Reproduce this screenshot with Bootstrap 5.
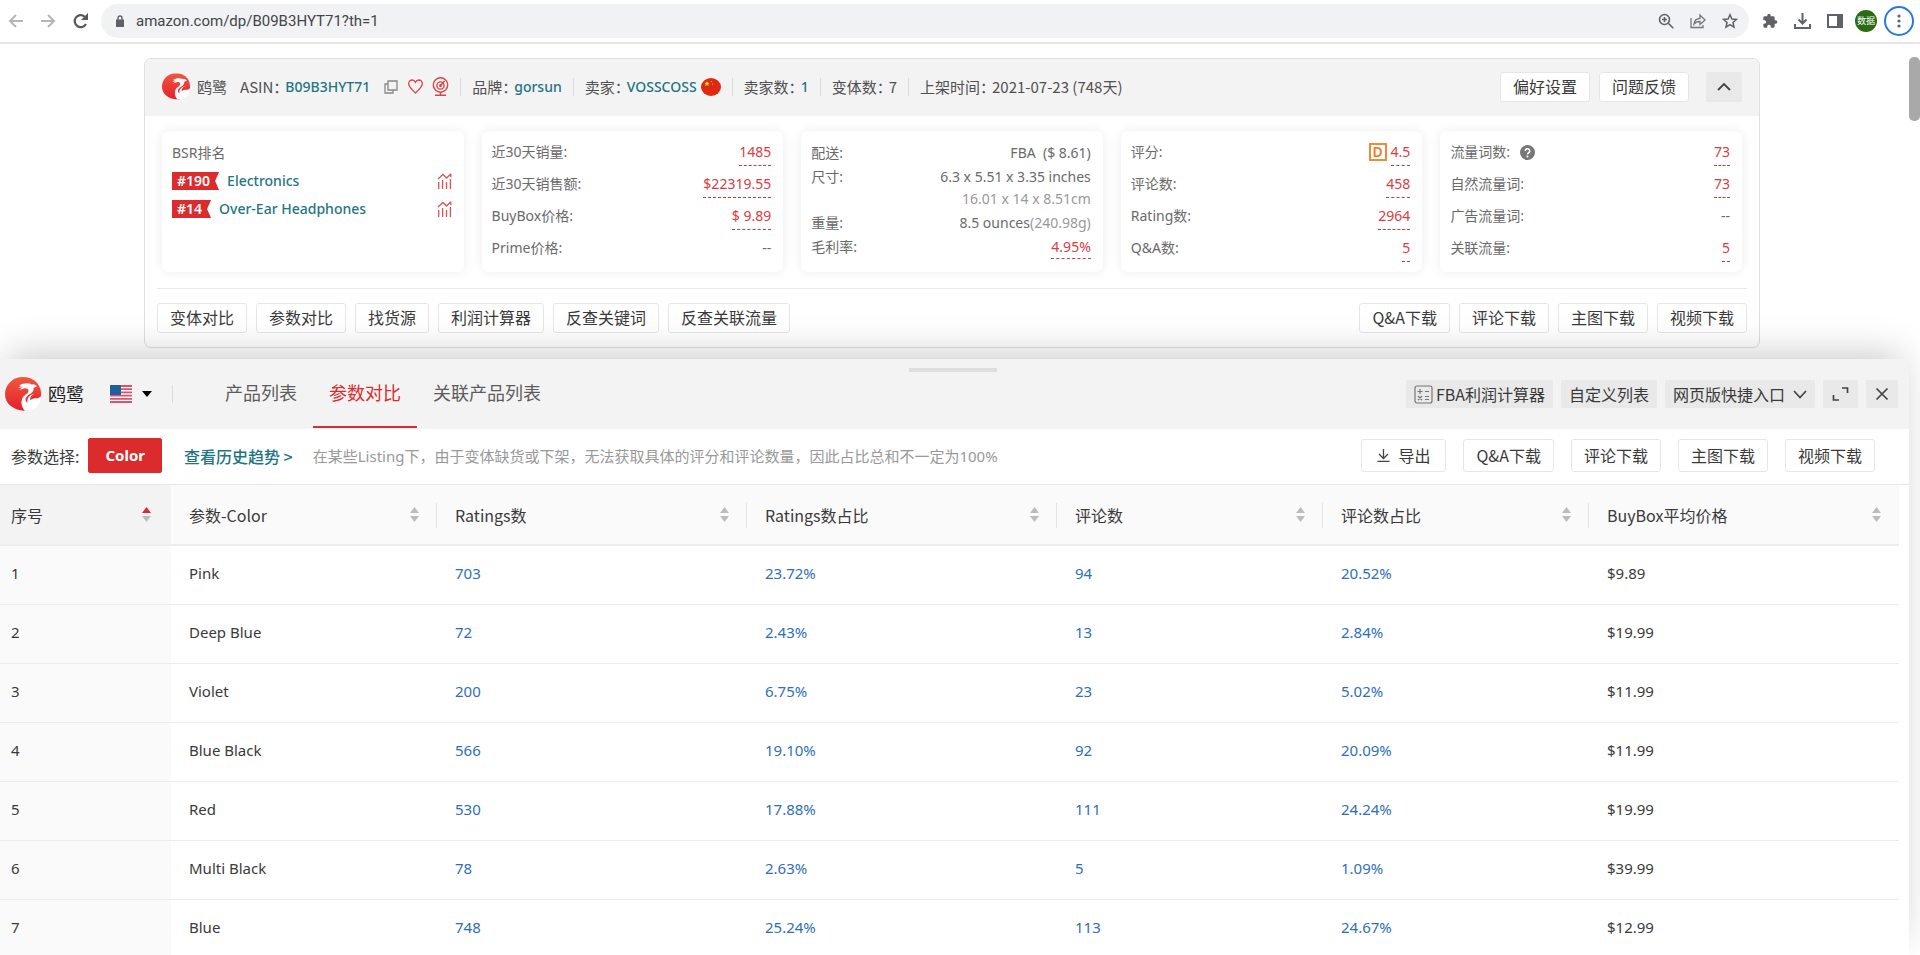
<!DOCTYPE html>
<html lang="zh-CN">
<head>
<meta charset="utf-8">
<meta name="viewport" content="width=device-width, initial-scale=1">
<title>鸥鹭 - 参数对比</title>
<link href="https://cdn.jsdelivr.net/npm/bootstrap@5.3.0/dist/css/bootstrap.min.css" rel="stylesheet">
<style>
  :root { --brand-red: #dc2b2d; --teal: #1f7583; --ink: #3a3a3a; --soft: #6a6a6a; --line: #e9e9e9; }
  body { font-family: "Noto Sans", "Noto Sans CJK SC", sans-serif; font-size: 14px; line-height: 22px; color: var(--ink); background: #fff; height: 100vh; overflow: hidden; position: relative; }
  a { text-decoration: none; }
  svg { display: block; flex: none; }
  .cjk { font-family: "Noto Sans CJK SC", sans-serif; font-size: 16px; }
  .f15 { font-size: 15px; }

  /* browser bar */
  .toolbar-top { height: 44px; border-bottom: 2px solid #e6e6e6; padding: 0 6px 0 8px; color: #5f6368; }
  .icon-btn { border: 0; background: none; padding: 0; color: inherit; }
  .omnibox { height: 34px; border-radius: 17px; background: #f0f2f4; padding: 0 11px 0 15px; margin-left: 12px; }
  .omnibox input { border: 0; background: none; outline: 0; color: #43464a; font-family: Roboto, sans-serif; font-size: 15px; padding: 0; margin-left: 12px; }
  .avatar { width: 22px; height: 22px; border-radius: 50%; background: #2b6b16; color: #fff; font-size: 9px; line-height: 22px; padding: 0; border: 0; }
  .ring { width: 30px; height: 30px; border-radius: 50%; border: 2px solid #2a78dc; }
  .page-thumb { position: absolute; right: 0; top: 57px; width: 11px; height: 64px; border-radius: 5px; background: #a9a9a9; }

  /* product summary panel */
  .summary { margin: 14px 160px 11px 144px; border: 1px solid #dde0e1; border-radius: 7px; background: #fff; }
  .summary-head { background: #f3f3f3; height: 57px; padding: 0 17px 2px; border-radius: 6px 6px 0 0; color: #505050; font-family: "Noto Sans CJK SC", sans-serif; }
  .summary-head .teal { font-family: "Noto Sans", sans-serif; font-size: 14px; }
  .summary-head .lbl { margin-right: -3px; }
  .vline { width: 1px; height: 18px; background: #dcdcdc; flex: none; }
  .summary-head .vline { margin: 0 11px; }
  .teal { color: var(--teal); font-weight: 500; }
  .btn-plain { --bs-btn-border-color: #e6e6e6; --bs-btn-bg: #fff; --bs-btn-color: #3a3a3a; --bs-btn-hover-bg: #f5f5f5; --bs-btn-hover-border-color: #ddd; --bs-btn-border-radius: 3px; --bs-btn-padding-x: 12px; --bs-btn-padding-y: 0; font-family: "Noto Sans CJK SC", sans-serif; font-size: 16px; line-height: 26px; padding-bottom: 2px; }
  .btn-soft { --bs-btn-bg: #e9e9e9; --bs-btn-border-color: #e9e9e9; --bs-btn-hover-bg: #dedede; --bs-btn-hover-border-color: #dedede; --bs-btn-border-radius: 2px; --bs-btn-padding-x: 7px; padding-bottom: 0; }
  .tiles { padding: 15px 17px 16px; gap: 18px; }
  .tile { flex: 1 1 0; min-width: 0; height: 141px; padding: 5px 12px 5px 10px; border-radius: 7px; background: #fff; box-shadow: 0 0 12px rgba(0,0,0,.08); color: var(--soft); }
  .tile-row { display: flex; justify-content: space-between; align-items: flex-start; padding-top: 5px; height: 32px; }
  .tile-tight { display: flex; flex-direction: column; gap: 2px; padding-top: 11px; }
  .tile-tight .tile-row { padding-top: 0; height: auto; }
  .val { color: #dd3b3e; border-bottom: 1px dashed #c9383b; padding-bottom: 2px; line-height: 22px; }
  .grade { border: 2px solid #ee8a3c; color: #ee7a24; font-weight: 600; width: 18px; height: 18px; line-height: 14px; text-align: center; margin: 2px 4px 0 0; }
  .rank-tag { background: var(--brand-red); color: #fff; font-weight: 600; line-height: 18px; height: 18px; padding: 0 9px 0 5px; clip-path: polygon(0 0, 100% 0, calc(100% - 4px) 50%, 100% 100%, 0 100%); }
  .rank-name { line-height: 18px; }
  .summary-foot { margin: 0 12px; padding: 14px 0; border-top: 1px solid #ebebeb; }
  .summary-foot .btn-plain { --bs-btn-bg: transparent; }

  /* drawer */
  .drawer { position: relative; margin-right: 11px; background: #fff; box-shadow: 0 -12px 36px -8px rgba(0,0,0,.22); }
  .drawer-head { background: #f3f3f3; height: 70px; padding: 0 11px 0 5px; position: relative; }
  .grip { position: absolute; left: 50%; top: 9px; width: 88px; height: 4px; margin-left: -46px; background: #dedede; border: 0; padding: 0; }
  .brand-name { font-size: 18px; color: #222; }
  .drawer-tabs { margin-left: 36px; height: 70px; }
  .drawer-tabs .nav-link { color: #5c5c5c; font-size: 18px; line-height: 66px; padding: 1px 16px 0; height: 69px; border-bottom: 2px solid transparent; border-radius: 0; }
  .drawer-tabs .nav-link.active { color: var(--brand-red); border-color: var(--brand-red); background: none; }
  .filter-bar { height: 56px; padding: 0 34px 2px 11px; border-bottom: 1px solid #e6e6e6; }
  .btn-color { --bs-btn-bg: var(--brand-red); --bs-btn-border-color: var(--brand-red); --bs-btn-color: #fff; --bs-btn-hover-bg: #c02022; --bs-btn-hover-color: #fff; --bs-btn-border-radius: 2px; --bs-btn-padding-x: 16px; --bs-btn-padding-y: 0; font-weight: 700; font-size: 15px; line-height: 33px; }
  .hint { color: #999; }
  .filter-bar .btn-plain { line-height: 30px; padding-bottom: 1px; }

  /* comparison table */
  .grid-wrap { padding-right: 11px; background: #fff; }
  .grid { table-layout: fixed; margin: 0; font-size: 15px; --bs-table-bg: transparent; --bs-table-color: #3a3a3a; }
  .grid > :not(caption) > * > * { padding: 0 18px 4px; height: 59px; vertical-align: middle; border-bottom: 1px solid #ececec; }
  .grid > thead > tr > th { height: 60px; padding-bottom: 0; font-weight: 400; background: #fafafa; border-bottom: 2px solid #ededed; }
  .grid > * > tr > :first-child { padding-left: 11px; padding-right: 20px; }
  .grid > tbody > tr > th { background: #fafafa; font-weight: 400; }
  .grid > thead > tr > th:first-child { background: #f3f3f3; }
  .grid > thead > tr > th.sep { background: linear-gradient(#e4e4e4, #e4e4e4) right 18px / 1px 25px no-repeat #fafafa; }
  .grid a { color: #2f6fb8; }
</style>
</head>
<body>
<svg width="0" height="0" class="position-absolute" aria-hidden="true">
  <defs>
    <linearGradient id="red" x1="0" y1="0" x2="0" y2="1"><stop offset="0" stop-color="#f0573f"/><stop offset="1" stop-color="#e3202a"/></linearGradient>
    <symbol id="logo" viewBox="0 0 36 34">
      <path fill="url(#red)" d="M18 0C8 0 0 7.500 0 17c0 9 7 16.500 22 17l6-4 8-11C37 8 29 0 18 0Z"/>
      <path fill="#fff" d="M14 8.500c4-2.500 9-3 13-1 1.500-.5 3.500 0 5 2-1.500.3-2.500 1-3.500 1.500.5 2.500-1 4.500-3.500 6-3 1.800-4.500 3.500-4.500 5.500 0 1.500.8 2.800 2 3.500-.8-4.500 2-8.500 6.500-9 3-.3 6 1 7 4C35 29 29 34 20 34c-3.500-4-4.500-9-2.500-13 2-3.700 6.500-4.500 6-7.500-.3-2-2.500-2.500-4.500-2l-5 1.500 3.500-2.500-4.500.2 3.500-1.700Z"/>
      <path fill="#e9322f" d="M35.500 19c-2-2.800-6-3-8.500-.8-1.800 1.700-2.200 3.300-1.500 5 1.500-1.500 3.500-1.900 5.500-1.900 2.500 0 3.800-.5 4.500-2.300Z"/>
    </symbol>
    <symbol id="chart" viewBox="0 0 15 16"><path d="M1 6l5-4.500L9.500 5 14 .700M13.800 4v-3.300M1.700 16V9M5.600 16V7M9.500 16V9M13.400 16V6" fill="none" stroke="#dd5456" stroke-width="1.300"/></symbol>
    <symbol id="sort" viewBox="0 0 9 15"><path fill="#bcbcbc" d="M4.500 0 9 6H0z"/><path fill="#bcbcbc" d="M4.500 15 9 9H0z"/></symbol>
    <symbol id="sort-up" viewBox="0 0 9 15"><path fill="#dc2b2d" d="M4.500 0 9 6H0z"/><path fill="#bcbcbc" d="M4.500 15 9 9H0z"/></symbol>
  </defs>
</svg>

<header class="toolbar-top d-flex align-items-center">
  <button class="icon-btn" aria-label="后退"><svg width="16" height="16" viewBox="0 0 16 16" fill="none" stroke="#b4b6b8" stroke-width="2"><path d="M15 8H2M8 2 2 8l6 6"/></svg></button>
  <button class="icon-btn ms-3" aria-label="前进"><svg width="16" height="16" viewBox="0 0 16 16" fill="none" stroke="#b4b6b8" stroke-width="2"><path d="M1 8h13M8 2l6 6-6 6"/></svg></button>
  <button class="icon-btn ms-3" aria-label="刷新"><svg width="17" height="16" viewBox="0 0 17 16"><path d="M14 11A6 6 0 1 1 12.500 3.500L14 5" fill="none" stroke="#55585c" stroke-width="2.200"/><path fill="#55585c" d="M16 0v7H9z"/></svg></button>
  <div class="omnibox d-flex align-items-center flex-grow-1">
    <svg width="8" height="12" viewBox="0 0 8 12"><path fill="#5f6368" d="M0 4.500h8V12H0z"/><path d="M2 5V3a2 2 0 0 1 4 0v2" fill="none" stroke="#5f6368" stroke-width="1.400"/></svg>
    <input class="flex-grow-1" type="text" value="amazon.com/dp/B09B3HYT71?th=1" aria-label="地址">
    <div class="d-flex align-items-center gap-3">
      <button class="icon-btn" aria-label="缩放"><svg width="16" height="16" viewBox="0 0 16 16" fill="none" stroke="#5f6368" stroke-width="1.600"><circle cx="6.500" cy="6.500" r="5"/><path d="m10.300 10.300 5 5M4 6.500h5M6.500 4v5"/></svg></button>
      <button class="icon-btn" aria-label="分享"><svg width="16" height="16" viewBox="0 0 16 16" fill="none" stroke="#74777b" stroke-width="1.300"><path d="M1 5v9.500h12V12M4 11c.5-4 3-5.500 6-5.500V2l5 5-5 4.500V8.500C7.500 8.500 5.500 9 4 11Z"/></svg></button>
      <button class="icon-btn" aria-label="收藏"><svg width="16" height="16" viewBox="0 0 16 16" fill="none" stroke="#5f6368" stroke-width="1.500"><path d="m8 1.700 1.900 4.300 4.600.4-3.500 3.100 1 4.600L8 11.700l-4 2.400 1-4.600L1.500 6.400 6.100 6Z"/></svg></button>
    </div>
  </div>
  <div class="d-flex align-items-center" style="gap:12px;margin-left:13px">
    <div class="d-flex align-items-center gap-3">
    <button class="icon-btn" aria-label="扩展程序"><svg width="16" height="16" viewBox="0 0 24 24"><path fill="#5f6368" d="M20.500 11H19V7a2 2 0 0 0-2-2h-4V3.500a2.500 2.500 0 0 0-5 0V5H4a2 2 0 0 0-2 2v3.800h1.500a2.700 2.700 0 0 1 0 5.400H2V20a2 2 0 0 0 2 2h3.800v-1.500a2.700 2.700 0 0 1 5.400 0V22H17a2 2 0 0 0 2-2v-4h1.500a2.500 2.500 0 0 0 0-5Z"/></svg></button>
    <button class="icon-btn" aria-label="下载"><svg width="17" height="16" viewBox="0 0 17 16" fill="none" stroke="#5f6368" stroke-width="2"><path d="M8.500 0v10M4.500 6.500l4 4 4-4M1 11v4h15v-4"/></svg></button>
    <button class="icon-btn" aria-label="侧边栏"><svg width="16" height="14" viewBox="0 0 16 14"><path d="M1 1h14v12H1z" fill="none" stroke="#5f6368" stroke-width="2"/><path fill="#5f6368" d="M10 1h5v12h-5z"/></svg></button>
    </div>
    <div class="d-flex align-items-center" style="gap:7px"><button class="avatar">数据</button>
    <button class="icon-btn ring d-flex align-items-center justify-content-center" aria-label="菜单"><svg width="4" height="14" viewBox="0 0 4 14" fill="#5f6368"><circle cx="2" cy="2" r="1.600"/><circle cx="2" cy="7" r="1.600"/><circle cx="2" cy="12" r="1.600"/></svg></button></div>
  </div>
</header>
<div class="page-thumb"></div>

<main>
<section class="summary">
  <div class="summary-head d-flex align-items-center f15">
    <svg width="28" height="27" viewBox="0 0 36 34"><use href="#logo"/></svg>
    <span style="margin-left:7px">鸥鹭</span>
    <span class="lbl" style="margin-left:13px">ASIN：</span><a href="#" class="teal">B09B3HYT71</a>
    <button class="icon-btn" style="margin-left:14px" aria-label="复制"><svg width="14" height="14" viewBox="0 0 14 14" fill="none" stroke="#888" stroke-width="1.300"><path d="M4 1h9v9H4zM4 4H1v9h8v-3"/></svg></button>
    <button class="icon-btn" style="margin-left:10px" aria-label="收藏产品"><svg width="15" height="15" viewBox="0 0 15 15" fill="none" stroke="#dc4548" stroke-width="1.300"><path d="M7.500 14C3 10 .7 7.500.7 4.800.7 2.500 2.300 1 4.200 1 5.600 1 6.800 1.800 7.500 3.200 8.200 1.800 9.400 1 10.800 1c1.900 0 3.500 1.500 3.500 3.800C14.300 7.500 12 10 7.500 14Z"/></svg></button>
    <button class="icon-btn" style="margin-left:9px" aria-label="监控"><svg width="17" height="19" viewBox="0 0 17 19" fill="none" stroke="#dc4548" stroke-width="1.400"><circle cx="8.500" cy="8" r="7.200"/><circle cx="8.500" cy="8.500" r="3.600"/><circle cx="8.500" cy="8.500" r=".8"/><path d="m9 8 3.500-4M8.500 15v3M3 18.200h11"/></svg></button>
    <i class="vline"></i>
    <span class="lbl">品牌：</span><a href="#" class="teal">gorsun</a>
    <i class="vline"></i>
    <span class="lbl">卖家：</span><a href="#" class="teal">VOSSCOSS</a>
    <svg class="ms-1" width="20" height="18" viewBox="0 0 20 18"><ellipse cx="10" cy="9" rx="10" ry="9" fill="#de2910"/><path fill="#fd3" d="m6 3 .8 1.800 2 .1-1.600 1.200.6 1.900L6 6.900 4.200 8l.6-1.900-1.600-1.200 2-.1Z"/><circle cx="10.500" cy="3.500" r=".6" fill="#fd3"/><circle cx="11.500" cy="6" r=".6" fill="#fd3"/></svg>
    <i class="vline"></i>
    <span class="lbl">卖家数：</span><a href="#" class="teal">1</a>
    <i class="vline"></i>
    <span class="lbl">变体数：</span><span>7</span>
    <i class="vline"></i>
    <span class="lbl">上架时间：</span><span>2021-07-23 (748天)</span>
    <div class="d-flex ms-auto" style="gap:9px">
      <button class="btn btn-plain">偏好设置</button>
      <button class="btn btn-plain">问题反馈</button>
      <button class="btn btn-plain btn-soft px-2 ms-2 d-flex align-items-center" aria-label="收起"><svg width="18" height="18" viewBox="0 0 18 18" fill="none" stroke="#444" stroke-width="1.800"><path d="m3 12 6-6 6 6"/></svg></button>
    </div>
  </div>

  <div class="tiles d-flex">
    <div class="tile tile-tight">
      <div>BSR排名</div>
      <div class="d-flex flex-column" style="gap:10px;margin-top:6px">
        <div class="d-flex align-items-center gap-2"><span class="rank-tag">#190</span><a href="#" class="teal rank-name">Electronics</a><svg class="ms-auto" width="15" height="16"><use href="#chart"/></svg></div>
        <div class="d-flex align-items-center gap-2"><span class="rank-tag">#14</span><a href="#" class="teal rank-name">Over-Ear Headphones</a><svg class="ms-auto" width="15" height="16"><use href="#chart"/></svg></div>
      </div>
    </div>
    <div class="tile">
      <div class="tile-row"><span>近30天销量:</span><a href="#" class="val">1485</a></div>
      <div class="tile-row"><span>近30天销售额:</span><a href="#" class="val">$22319.55</a></div>
      <div class="tile-row"><span>BuyBox价格:</span><a href="#" class="val">$ 9.89</a></div>
      <div class="tile-row"><span>Prime价格:</span><span>--</span></div>
    </div>
    <div class="tile tile-tight">
      <div class="tile-row"><span>配送:</span><span>FBA&nbsp; ($ 8.61)</span></div>
      <div class="tile-row"><span>尺寸:</span><span class="text-end">6.3 x 5.51 x 3.35 inches<br><span class="hint">16.01 x 14 x 8.51cm</span></span></div>
      <div class="tile-row"><span>重量:</span><span>8.5 ounces<span class="hint">(240.98g)</span></span></div>
      <div class="tile-row"><span>毛利率:</span><a href="#" class="val pb-0">4.95%</a></div>
    </div>
    <div class="tile">
      <div class="tile-row"><span>评分:</span><span class="d-flex align-items-start"><span class="grade">D</span><a href="#" class="val">4.5</a></span></div>
      <div class="tile-row"><span>评论数:</span><a href="#" class="val">458</a></div>
      <div class="tile-row"><span>Rating数:</span><a href="#" class="val">2964</a></div>
      <div class="tile-row"><span>Q&amp;A数:</span><a href="#" class="val">5</a></div>
    </div>
    <div class="tile">
      <div class="tile-row"><span class="d-flex align-items-center" style="gap:10px">流量词数: <svg width="15" height="15" viewBox="0 0 15 15"><circle cx="7.500" cy="7.500" r="7.500" fill="#777"/><path d="M5.300 6a2.200 2.200 0 1 1 3 2c-.6.3-.8.6-.8 1.400" fill="none" stroke="#fff" stroke-width="1.500"/><circle cx="7.500" cy="11.500" r="1" fill="#fff"/></svg></span><a href="#" class="val">73</a></div>
      <div class="tile-row"><span>自然流量词:</span><a href="#" class="val">73</a></div>
      <div class="tile-row"><span>广告流量词:</span><span>--</span></div>
      <div class="tile-row"><span>关联流量:</span><a href="#" class="val">5</a></div>
    </div>
  </div>

  <div class="summary-foot d-flex" style="gap:9px">
    <button class="btn btn-plain">变体对比</button>
    <button class="btn btn-plain">参数对比</button>
    <button class="btn btn-plain">找货源</button>
    <button class="btn btn-plain">利润计算器</button>
    <button class="btn btn-plain">反查关键词</button>
    <button class="btn btn-plain">反查关联流量</button>
    <button class="btn btn-plain ms-auto">Q&amp;A下载</button>
    <button class="btn btn-plain">评论下载</button>
    <button class="btn btn-plain">主图下载</button>
    <button class="btn btn-plain">视频下载</button>
  </div>
</section>

<section class="drawer">
  <div class="drawer-head d-flex align-items-center">
    <button class="grip" aria-label="调整高度"></button>
    <svg width="36" height="34"><use href="#logo"/></svg>
    <span class="brand-name" style="margin-left:7px">鸥鹭</span>
    <button class="icon-btn d-flex align-items-center" style="margin-left:26px;gap:10px" aria-label="站点">
      <svg width="22" height="18" viewBox="0 0 22 18"><path fill="#fff" d="M0 0h22v18H0z"/><path d="M0 1h22M0 4.200h22M0 7.400h22M0 10.600h22M0 13.800h22M0 17h22" stroke="#e0506a" stroke-width="1.800"/><path fill="#20609f" d="M0 0h11v10H0z"/></svg>
      <svg width="10" height="6" viewBox="0 0 10 6"><path d="M0 0h10L5 6z"/></svg>
    </button>
    <i class="vline" style="margin-left:20px"></i>
    <nav class="nav drawer-tabs">
      <a class="nav-link" href="#">产品列表</a>
      <a class="nav-link active" href="#">参数对比</a>
      <a class="nav-link" href="#">关联产品列表</a>
    </nav>
    <div class="d-flex ms-auto" style="gap:8px">
      <button class="btn btn-plain btn-soft d-flex align-items-center"><svg style="margin-right:3px" width="19" height="19" viewBox="0 0 19 19" fill="none" stroke="#777" stroke-width="1.200"><rect x="1" y="1" width="17" height="17" rx="2"/><path d="M3.500 6.500h5M6 4v5M11 6.500h4M4 11l4 4M8 11l-4 4M11 11.500h4M11 14.500h4"/></svg>FBA利润计算器</button>
      <button class="btn btn-plain btn-soft">自定义列表</button>
      <button class="btn btn-plain btn-soft d-flex align-items-center gap-2">网页版快捷入口<svg width="14" height="9" viewBox="0 0 14 9" fill="none" stroke="#444" stroke-width="1.700"><path d="m1 1 6 6.500L13 1"/></svg></button>
      <button class="btn btn-plain btn-soft d-flex align-items-center px-2" aria-label="展开"><svg width="17" height="16" viewBox="0 0 17 16" fill="none" stroke="#444" stroke-width="1.700"><path d="M10 2h5.500v5M7 14H1.500V9"/></svg></button>
      <button class="btn btn-plain btn-soft d-flex align-items-center px-2" aria-label="关闭"><svg width="14" height="14" viewBox="0 0 14 14" fill="none" stroke="#444" stroke-width="1.700"><path d="m1.500 1.500 11 11M12.500 1.500l-11 11"/></svg></button>
    </div>
  </div>

  <div class="filter-bar d-flex align-items-center">
    <span class="cjk">参数选择:</span>
    <button class="btn btn-color" style="margin-left:9px">Color</button>
    <a href="#" class="teal cjk" style="margin-left:22px">查看历史趋势 &gt;</a>
    <span class="hint f15 text-nowrap" style="margin-left:20px">在某些Listing下，由于变体缺货或下架，无法获取具体的评分和评论数量，因此占比总和不一定为100%</span>
    <div class="d-flex ms-auto" style="gap:17px">
      <button class="btn btn-plain d-flex align-items-center gap-2" style="--bs-btn-padding-x:15px"><svg width="13" height="13" viewBox="0 0 13 13" fill="none" stroke="#444" stroke-width="1.300"><path d="M6.500 0v9M2 5l4.500 4.500L11 5M.500 12.300h12"/></svg>导出</button>
      <button class="btn btn-plain">Q&amp;A下载</button>
      <button class="btn btn-plain">评论下载</button>
      <button class="btn btn-plain">主图下载</button>
      <button class="btn btn-plain">视频下载</button>
    </div>
  </div>

  <div class="grid-wrap">
    <table class="table grid" id="compare">
      <colgroup><col style="width:171px"><col style="width:266px"><col style="width:310px"><col style="width:310px"><col style="width:266px"><col style="width:266px"><col style="width:310px"></colgroup>
      <thead><tr class="cjk"></tr></thead>
      <tbody></tbody>
    </table>
  </div>
</section>
</main>

<script src="https://cdn.jsdelivr.net/npm/bootstrap@5.3.0/dist/js/bootstrap.bundle.min.js"></script>
<script>
  const heads = ['序号', '参数-Color', 'Ratings数', 'Ratings数占比', '评论数', '评论数占比', 'BuyBox平均价格'];
  const rows = [
    ['Pink', '703', '23.72%', '94', '20.52%', '$9.89'],
    ['Deep Blue', '72', '2.43%', '13', '2.84%', '$19.99'],
    ['Violet', '200', '6.75%', '23', '5.02%', '$11.99'],
    ['Blue Black', '566', '19.10%', '92', '20.09%', '$11.99'],
    ['Red', '530', '17.88%', '111', '24.24%', '$19.99'],
    ['Multi Black', '78', '2.63%', '5', '1.09%', '$39.99'],
    ['Blue', '748', '25.24%', '113', '24.67%', '$12.99']
  ];
  document.querySelector('#compare thead tr').innerHTML = heads.map((h, i) =>
    `<th scope="col" class="${i > 0 && i < 6 ? 'sep' : ''}"><div class="d-flex align-items-center justify-content-between"><span>${h}</span><svg width="9" height="15"><use href="#${i ? 'sort' : 'sort-up'}"/></svg></div></th>`).join('');
  document.querySelector('#compare tbody').innerHTML = rows.map((r, n) =>
    `<tr><th scope="row">${n + 1}</th>` + r.map((c, i) => `<td>${i > 0 && i < 5 ? `<a href="#">${c}</a>` : c}</td>`).join('') + '</tr>').join('');
</script>
</body>
</html>
